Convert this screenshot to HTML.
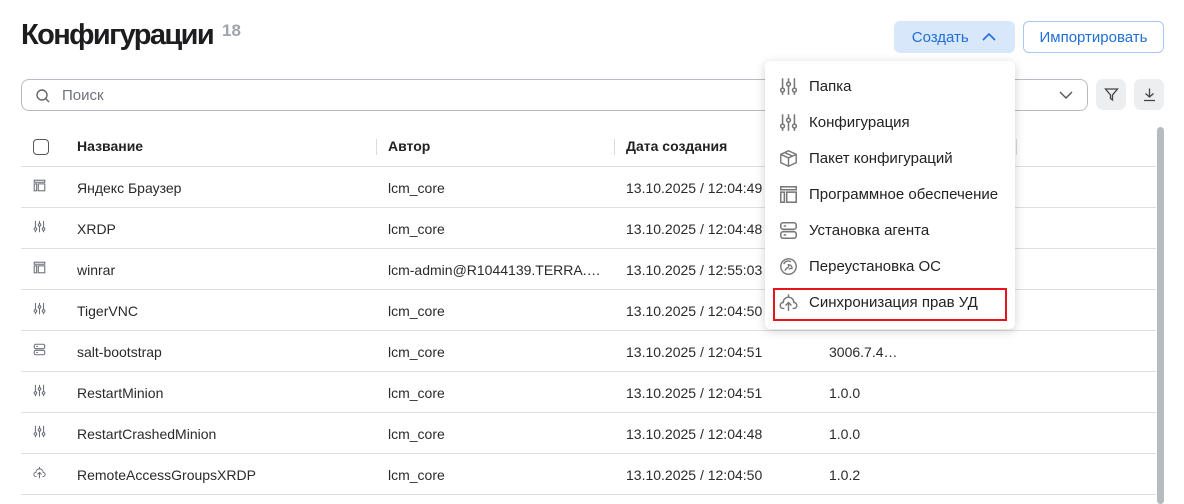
<!DOCTYPE html>
<html><head><meta charset="utf-8"><style>
*{box-sizing:border-box;margin:0;padding:0}
body{width:1184px;height:504px;overflow:hidden;background:#fff;font-family:"Liberation Sans",sans-serif;color:#222;position:relative}
.abs{position:absolute}
h1{position:absolute;left:21px;top:19px;font-size:29px;font-weight:700;letter-spacing:-1.6px;color:#1d1d1f}
.cnt{left:222px;top:21px;font-size:17px;color:#a0a4aa;font-weight:700}
.btn{border-radius:6px;font-size:15px;color:#1f6fd6;display:flex;align-items:center;justify-content:center}
.search{left:21px;top:79px;width:1067px;height:32px;border:1px solid #b8bcc2;border-radius:8px}
.ib{width:30px;height:31px;background:#eceef0;border-radius:7px;top:79px}
.hd{top:126px;height:40px;font-size:14px;font-weight:700;line-height:40px}
.line{left:21px;width:1135px;height:1px;background:#dcdfe3}
.cell{font-size:14px;color:#2a2a2a}
.sep{width:1px;height:16px;background:#d8dbdf;top:139px}
.menu{left:765px;top:61px;width:250px;height:268px;background:#fff;border-radius:6px;box-shadow:0 2px 10px rgba(0,0,0,.18)}
.mi{position:absolute;left:14px;font-size:15px;color:#222;display:flex;align-items:center;gap:11px}
.mi svg{width:19px;height:19px}
.ti{width:13px;height:13px;color:#6b7078}
</style></head><body>
<h1>Конфигурации</h1>
<div class="abs cnt">18</div>
<div class="abs btn" style="left:894px;top:21px;width:121px;height:32px;background:#d9e7fb">Создать&nbsp;&nbsp;&nbsp;<svg width="16" height="10" viewBox="0 0 16 10"><path d="M2 8 L8 2 L14 8" fill="none" stroke="#1f6fd6" stroke-width="1.6"/></svg></div>
<div class="abs btn" style="left:1023px;top:21px;width:141px;height:32px;border:1px solid #a9c8f0">Импортировать</div>
<div class="abs search"></div>
<svg class="abs" style="left:35px;top:88px" width="16" height="16" viewBox="0 0 16 16"><circle cx="7" cy="7" r="5" fill="none" stroke="#666" stroke-width="1.4"/><path d="M10.5 10.5 L14 14" stroke="#666" stroke-width="1.4"/></svg>
<div class="abs" style="left:62px;top:87px;font-size:15px;color:#6e7378">Поиск</div>
<svg class="abs" style="left:1058px;top:88px" width="16" height="14" viewBox="0 0 16 14"><path d="M2 4 L8 10 L14 4" fill="none" stroke="#555" stroke-width="1.4"/></svg>
<div class="abs ib" style="left:1096px"><svg style="margin:8px" width="15" height="15" viewBox="0 0 15 15"><path d="M1.5 2 H13.5 L8.5 8 V13 L6.5 11.5 V8 Z" fill="none" stroke="#444" stroke-width="1.3"/></svg></div>
<div class="abs ib" style="left:1134px"><svg style="margin:8px" width="15" height="15" viewBox="0 0 15 15"><path d="M7.5 1.5 V10 M3.5 6.5 L7.5 10 L11.5 6.5 M2 13.5 H13" fill="none" stroke="#444" stroke-width="1.3"/></svg></div>

<div class="abs" style="left:33px;top:139px;width:16px;height:16px;border:1.5px solid #555;border-radius:4px"></div>
<div class="abs hd" style="left:77px">Название</div>
<div class="abs sep" style="left:376px"></div>
<div class="abs hd" style="left:388px">Автор</div>
<div class="abs sep" style="left:614px"></div>
<div class="abs hd" style="left:626px">Дата создания</div>
<div class="abs sep" style="left:1016px"></div>
<div class="abs line" style="top:166px"></div>
<div class="abs" style="left:1157px;top:127px;width:7px;height:377px;background:#b7babe;border-radius:4px"></div>

<div class="abs line" style="top:207px"></div><div class="abs line" style="top:248px"></div><div class="abs line" style="top:289px"></div><div class="abs line" style="top:330px"></div><div class="abs line" style="top:371px"></div><div class="abs line" style="top:412px"></div><div class="abs line" style="top:453px"></div><div class="abs line" style="top:494px"></div>

<div class="abs cell" style="left:77px;top:180px">Яндекс Браузер</div><div class="abs cell" style="left:388px;top:180px">lcm_core</div><div class="abs cell" style="left:626px;top:180px">13.10.2025 / 12:04:49</div>
<div class="abs cell" style="left:77px;top:221px">XRDP</div><div class="abs cell" style="left:388px;top:221px">lcm_core</div><div class="abs cell" style="left:626px;top:221px">13.10.2025 / 12:04:48</div>
<div class="abs cell" style="left:77px;top:262px">winrar</div><div class="abs cell" style="left:388px;top:262px">lcm-admin@R1044139.TERRA.…</div><div class="abs cell" style="left:626px;top:262px">13.10.2025 / 12:55:03</div>
<div class="abs cell" style="left:77px;top:303px">TigerVNC</div><div class="abs cell" style="left:388px;top:303px">lcm_core</div><div class="abs cell" style="left:626px;top:303px">13.10.2025 / 12:04:50</div>
<div class="abs cell" style="left:77px;top:344px">salt-bootstrap</div><div class="abs cell" style="left:388px;top:344px">lcm_core</div><div class="abs cell" style="left:626px;top:344px">13.10.2025 / 12:04:51</div><div class="abs cell" style="left:829px;top:344px">3006.7.4…</div>
<div class="abs cell" style="left:77px;top:385px">RestartMinion</div><div class="abs cell" style="left:388px;top:385px">lcm_core</div><div class="abs cell" style="left:626px;top:385px">13.10.2025 / 12:04:51</div><div class="abs cell" style="left:829px;top:385px">1.0.0</div>
<div class="abs cell" style="left:77px;top:426px">RestartCrashedMinion</div><div class="abs cell" style="left:388px;top:426px">lcm_core</div><div class="abs cell" style="left:626px;top:426px">13.10.2025 / 12:04:48</div><div class="abs cell" style="left:829px;top:426px">1.0.0</div>
<div class="abs cell" style="left:77px;top:467px">RemoteAccessGroupsXRDP</div><div class="abs cell" style="left:388px;top:467px">lcm_core</div><div class="abs cell" style="left:626px;top:467px">13.10.2025 / 12:04:50</div><div class="abs cell" style="left:829px;top:467px">1.0.2</div>

<svg width="0" height="0" style="position:absolute"><defs>
<symbol id="sw" viewBox="0 0 16 16"><g fill="none" stroke="currentColor" stroke-width="1.3"><path d="M3 1v8M8 1v3M13 1v8M3 13v2M8 8v7M13 13v2"/><circle cx="3" cy="11" r="1.6"/><circle cx="8" cy="6" r="1.6"/><circle cx="13" cy="11" r="1.6"/></g></symbol>
<symbol id="sf" viewBox="0 0 16 16"><g fill="none" stroke="currentColor" stroke-width="1.3"><rect x="1.5" y="1.5" width="13" height="2.5"/><rect x="1.5" y="6" width="3" height="8.5"/><rect x="6.5" y="6" width="8" height="8.5"/></g></symbol>
<symbol id="ag" viewBox="0 0 16 16"><g fill="none" stroke="currentColor" stroke-width="1.3"><rect x="1.5" y="1.5" width="13" height="5.5" rx="2"/><rect x="1.5" y="9" width="13" height="5.5" rx="2"/><path d="M4 4.2h2M4 11.7h2"/></g></symbol>
<symbol id="cl" viewBox="0 0 16 16"><g fill="none" stroke="currentColor" stroke-width="1.2"><path d="M4.5 13H3.5a2.5 2.5 0 0 1 0-5 4.5 4.5 0 0 1 9 0 2.5 2.5 0 0 1 0 5h-1"/><path d="M8 15V8M5.5 10.5 8 8l2.5 2.5M8 1v3"/></g></symbol>
<symbol id="bx" viewBox="0 0 16 16"><g fill="none" stroke="currentColor" stroke-width="1.2"><path d="M8 1.5 14.5 4.5v7L8 14.5 1.5 11.5v-7Z M1.5 4.5 8 7.5l6.5-3M8 7.5v7M4.8 3l6.5 3"/></g></symbol>
<symbol id="os" viewBox="0 0 16 16"><g fill="none" stroke="currentColor" stroke-width="1.2"><circle cx="8" cy="8" r="6.5"/><path d="M5 11.5c1-3 4-2 3-5 2 0 3 1.5 3 3-1 0-2 0-2.5 1M4 6a4 4 0 0 1 6-2"/></g></symbol>
</defs></svg>

<svg class="abs ti" style="left:33px;top:179px"><use href="#sf"/></svg>
<svg class="abs ti" style="left:33px;top:220px"><use href="#sw"/></svg>
<svg class="abs ti" style="left:33px;top:261px"><use href="#sf"/></svg>
<svg class="abs ti" style="left:33px;top:302px"><use href="#sw"/></svg>
<svg class="abs ti" style="left:33px;top:343px"><use href="#ag"/></svg>
<svg class="abs ti" style="left:33px;top:384px"><use href="#sw"/></svg>
<svg class="abs ti" style="left:33px;top:425px"><use href="#sw"/></svg>
<svg class="abs ti" style="left:33px;top:466px"><use href="#cl"/></svg>

<div class="abs menu">
<div class="mi" style="top:16px"><svg style="color:#777"><use href="#sw"/></svg>Папка</div>
<div class="mi" style="top:52px"><svg style="color:#777"><use href="#sw"/></svg>Конфигурация</div>
<div class="mi" style="top:88px"><svg style="color:#777"><use href="#bx"/></svg>Пакет конфигураций</div>
<div class="mi" style="top:124px"><svg style="color:#777"><use href="#sf"/></svg>Программное обеспечение</div>
<div class="mi" style="top:160px"><svg style="color:#777"><use href="#ag"/></svg>Установка агента</div>
<div class="mi" style="top:196px"><svg style="color:#777"><use href="#os"/></svg>Переустановка ОС</div>
<div class="mi" style="top:232px"><svg style="color:#777"><use href="#cl"/></svg>Синхронизация прав УД</div>
<div class="abs" style="left:8px;top:227px;width:234px;height:33px;border:2px solid #e8141c"></div>
</div>
</body></html>
